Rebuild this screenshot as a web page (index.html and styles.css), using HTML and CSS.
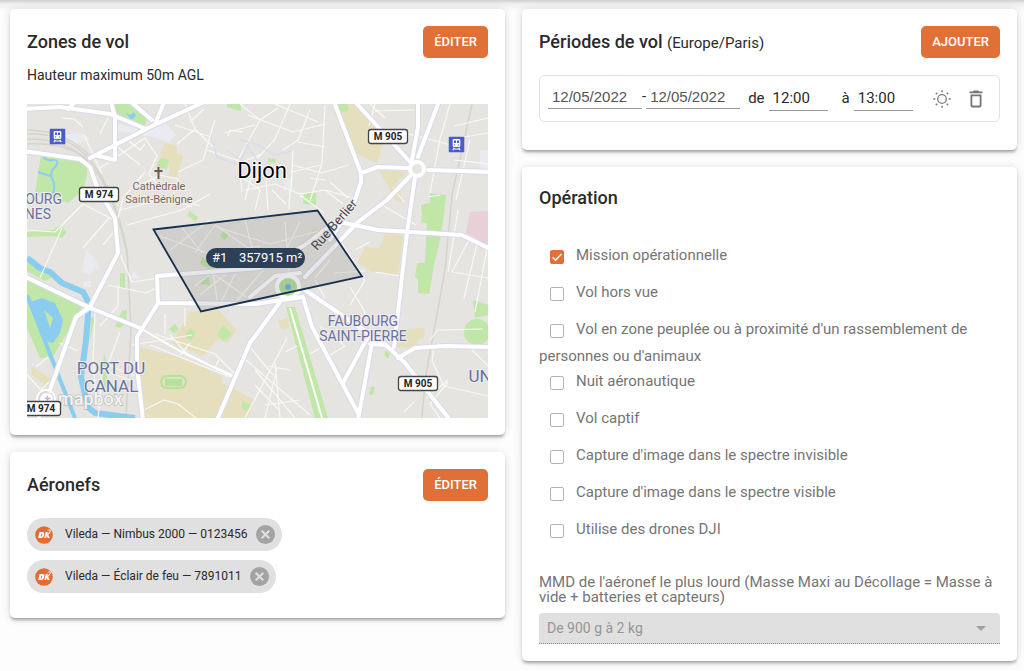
FILE: index.html
```html
<!DOCTYPE html>
<html lang="fr">
<head>
<meta charset="utf-8">
<meta name="viewport" content="width=device-width, initial-scale=1">
<title>Déclaration de vol</title>
<link rel="stylesheet" href="styles.css">
</head>
<body>
<svg class="defs" width="0" height="0" aria-hidden="true">
  <symbol id="dk" viewBox="0 0 18 18">
    <circle cx="9" cy="9" r="8.8" fill="#e56b2e"/>
    <path d="M4.6 6h3.2q2 0 1.5 2.3l-.3 1.2q-.6 2.5-2.7 2.5H3.1z" fill="#fff"/>
    <path d="M6.3 7.7h1l-.7 2.8h-1z" fill="#e56b2e"/>
    <path d="M10.8 6h1.9l-.5 2.1L14.8 5.4l1.4.2-3 3.1 1.6 3.3h-2.1l-1-2.2-.6 2.2H9.3z" fill="#fff"/>
    <path d="M12.6 4.6l2.7-1.4M14 5l2.2-.9" stroke="#fff" stroke-width=".7"/>
  </symbol>
  <symbol id="cancel" viewBox="0 0 19 19">
    <circle cx="9.5" cy="9.5" r="9.5" fill="#a3a3a3"/>
    <path d="M5.7 5.7l7.6 7.6M13.3 5.7l-7.6 7.6" stroke="#e0e0e0" stroke-width="2"/>
  </symbol>
  <symbol id="station" viewBox="0 0 16 16">
    <rect width="16" height="16" rx="1" fill="#4b5cc9"/>
    <path d="M5.5 2.5h5q1.3 0 1.3 1.3v5.4q0 1.3-1.3 1.3h-5q-1.300 0-1.300-1.300V3.800q0-1.300 1.300-1.300z" fill="#fff"/>
    <path d="M5.500 4h2v2.500h-2zM8.500 4h2v2.500h-2zM5.500 8h1.200v1H5.500zM9.300 8h1.200v1H9.300z" fill="#4b5cc9"/>
    <path d="M5.700 11.300L4.300 13.700M10.300 11.300l1.400 2.400M5 12.500h6" stroke="#fff" stroke-width="1.100"/>
  </symbol>
</svg>

<main class="page">
  <div class="column">
    <section class="card">
      <header class="card-head">
        <h2 class="title">Zones de vol</h2>
        <button class="btn" type="button">ÉDITER</button>
      </header>
      <p class="subtitle">Hauteur maximum 50m AGL</p>
      <svg class="map" viewBox="27 104 461 314" role="img" aria-label="Carte de Dijon">
        <rect x="27" y="104" width="461" height="314" fill="#e5e4e0"/>
        <!-- pedestrian areas and rail yard -->
        <path class="plaza" d="M118 124L145 130 165 122 176 135 169 142 148 136 118 131zM62 135L82 133 90 140 70 145zM86 250L94 257 101 271 94 268 90 276 82 272zM84 281h7v6h-7zM133 271l8 7h-10zM480 150h8v20h-8zM285 180l8-3-2 12-8 2z"/>
        <g class="rail">
          <path d="M27 134Q66 132 90 160T127 250L131 330 126 418M27 139Q70 138 93 167T128 260M27 144Q66 142 88 160M27 130Q66 130 92 158"/>
          <path d="M472 104L452 195 445 270 425 380 422 418"/>
        </g>
        <!-- sand blocks -->
        <path class="sand" d="M164 143L177 146 177 153 183 156 180 167 177 177 168 177 170 167 160 157zM338 110L347 104 355 104 383 137 383 143 377 163 355 153zM379 170L408 172 392 187 401 192 401 202 395 200zM385 233L403 235 398 275 373 272 357 263 365 247 380 248zM397 329L425 328 424 337 418 340 414 348 395 347zM140 347L180 357 222 376 222 383 255 400 248 418 144 418 139 370zM190 312L217 308 237 330 227 343 217 340 203 356 171 343zM32 367L50 378 47 387 31 374zM278 321L288 317 289 328 282 330zM313 228L325 231 318 241 309 239z"/>
        <path fill="#e7d0d8" d="M470 212L489 211 489 246 466 233z"/>
        <!-- parks -->
        <path class="park" d="M114 104L135 104 148 118 144 126 114 113zM41 155L87 163 87 175 83 190 68 203 35 193zM160 158L169 160 167 169 156 167zM227 104L241 104 241 111 227 107zM338 104L347 104 349 110 341 113zM268 158L276 159 275 163 268 162zM304 193L316 193 316 205 303 204zM430 193L446 195 444 215 440 240 434 265 431 283 429 294 418 293 418 279 415 277 417 263 425 263 427 223 421 222 422 215 421 205 430 203zM27 232L53 230 60 225 67 232 62 238 53 236 27 237zM27 280L83 305 53 357 40 358 27 328zM27 258L43 267 52 277 45 281 27 271zM120 273h5v16l-5-1zM122 311L127 310 126 323 120 328 115 326zM189 211L198 217 196 222 188 216zM202 257L213 265 211 270 200 264zM223 230l6 4-4 6-5-4zM205 276l4 1 1 8-10-1zM190 328l6 4-5 9-6-5zM223 325l9 9-8 7-7-6zM175 324l4 5-5 4-5-4zM243 401l7 4-3 6-6-3zM473 300L489 305 489 315 475 318zM386 350l4 4-2 5-4-4zM371 386l4 1-2 8-4-1zM104 353l3 12v16l4 7-4 3-5-7zM91 318l4-2-5 25zM286 307L295 307 328 418 315 418z"/>
        <circle class="park" cx="477" cy="332" r="13"/>
        <rect x="161" y="376" width="25" height="12" rx="6" fill="none" stroke="#b5e0a0" stroke-width="2"/>
        <rect x="165" y="379" width="17" height="7" fill="#b5e0a0"/>
        <!-- water -->
        <path class="water" d="M27 258L40 268 50 272 62 283 83 292 89 303 86 340 81 377 88 407 95 413 135 418" stroke-width="6"/>
        <path class="water" d="M27 295L50 354 75 418" stroke-width="4"/>
        <path fill="#8bcdef" d="M30 302L42 298 55 303 63 320 60 333 53 343 46 341 36 322zM126 113L130 115 134 112 136 116 131 120z"/>
        <path fill="#c3e6ab" d="M44 310L53 318 50 328z"/>
        <path class="water" d="M43 156q3 5 9 4 8-1 4 6-7 6-4 12 4 7 1 16M38 172l12 4" stroke-width="2"/>
        <!-- minor streets -->
        <g class="street">
          <path d="M62 118l12 1 9 8M84 135l18 39M110 114l-10 20M115 145l25 20M128 140l12 10 5-6M100 168l45-30 12 18-8 18 12 14M120 210l50-12 30 8M127 225l55-15 28-16M145 172l-22 26-5 20M140 185l20-10 18 4M178 179l-6 20 20 8M185 104l10 25 18 18M195 129l-18 15M175 125l36 12M190 122l14-13M215 120l-12 40-25 12M225 133l30-8M228 136l2-6 13 2M207 150l35 12 20-8"/>
          <path d="M240 104l20 16 18-12M260 120l-22 40 4 32M248 115l45 17 32-8M275 104l43 18M310 110l-12 30-15 10M325 105l-3 58-12 38M290 104l-15 35-20 22M298 142l27 5M293 150l-2 40M293 165l28 8 28-8M310 178l15 2M245 190l30-6 25 10 25-4 28 8M255 210l5-20-20-14M300 195l24 18M272 190l14 14M330 182l18 16M375 104l-6 22M385 130l-25-24M375 111l38-1M385 128l70 18M450 104l-10 35-10 54M488 118l-34 8M488 133l-36 6M454 160l35 4M470 140l-14 60M440 195l-12 2M393 188l11 14"/>
          <path d="M320 165l-28 7M266 180l2 30M245 200l6-22 28-4M290 189l-1 20M370 104l15 14M325 190l18 14M382 205l34 20M478 240l-14 58M488 244l-13 68M470 238l-18 34 36 6M458 210l-10 62M430 340l8-10 45-1M434 346l-2 15 12 25 44 10M448 380l-22 18M448 382l-18 22 10 14M472 350l17 17M404 412l10-10"/>
          <path d="M27 230l28 2 28-28 35 18M83 248l26-30M62 228l-22 50M103 245l10-12M118 250l14 32 80-12M108 285l38 8 12-6M118 286v20l-18 20M132 345l60-10M120 332l-12 32M95 312l-2 50 4 44M108 365l30 12M155 334l60 20 20 20M150 345l80 32M165 314v20M185 308v18M219 360l-4 7 18 8M170 335l20 22M98 420l4-50 28 10M144 410l20-10 14 4 18 14M180 355l10-12M248 345l25 30M240 355l70 60M255 370l40 48M255 385l24 25M265 418l12-50M280 418l-5-55M245 418l42-80M300 400l-35 5M290 370l-22-4M297 346l-12 6M320 326l25 20-20 12M325 345l-15 9M340 240l25 40-15 25M315 280l10 18M335 273l30-2M350 287l15 25-4 14M330 260l-15 18M355 250l15-8M375 272l26 4M27 375l14 15 8-8M36 367l12-10M60 343l18 8"/>
          <path d="M160 236l50 18 50-8M180 225l22 28M195 253l20-28 40 28M220 228l50 16 60-16M170 250l40-30M285 222l4 50M245 220l10 40M195 286l18-14 5 34M215 275l40 28M235 274l-15 30M265 268l-30 35M300 222l-20 40M200 295l25-20"/>
        </g>
        <path d="M211 137l6 20 22 8 8-20 12 18-4 18 20-8M226 150l18 12M240 140l18 5 16 10 18-4M250 165l-15 12" fill="none" stroke="#dadced" stroke-width="1.500"/>
        <!-- main roads -->
        <defs>
          <g id="roads" fill="none" stroke-linejoin="round" stroke-linecap="round">
            <path d="M24 109L60 107 110 114 146 129M111 102L115 117 115 160 95 155M131 102L152 120M202 103L150 127 90 158M164 102L156 122M75 102L68 109"/>
            <path d="M24 151L80 159 90 167 97 187 115 218 118 253 90 307 76 317 50 390 38 420M24 276L88 307 140 328M143 420L137 367 137 337 158 303 157 276 260 268 305 245 340 218M158 303L255 304 302 297M217 420L250 343 280 302"/>
            <path d="M415 171L387 200 358 222 305 277M334 102L361 173 361 182 355 200 330 240M361 173L378 167 408 168M357 104L411 163M418 102L418 127 412 160M438 104L418 157M428 170L492 172M415 177L407 233 394 347M340 222L378 230 462 235 492 250M305 290L368 333 388 347 405 363 450 420M303 297L312 327 358 413M372 343L358 420M370 333L343 383M370 344L386 345M398 358L415 348 445 346 492 347M250 297L275 276 300 273"/>
          </g>
        </defs>
        <use href="#roads" stroke="#d9daea" stroke-width="6"/>
        <use href="#roads" stroke="#fff" stroke-width="4"/>
        <path d="M140 328L180 351 232 376M290 308L322 418" fill="none" stroke="#fff" stroke-width="2"/>
        <circle cx="417" cy="169" r="7" fill="#e5e4e0" stroke="#fff" stroke-width="4"/>
        <circle cx="288" cy="287" r="11" fill="#b5e0a0" stroke="#fff" stroke-width="4"/>
        <circle cx="288" cy="287" r="3" fill="#71b7e6"/>
        <text class="road-name" x="317" y="251" transform="rotate(-49 317 251)">Rue Berlier</text>
        <!-- flight zone -->
        <path d="M153.500 229.500L317.500 210.500 362 276.500 201 311.500z" fill="#555" fill-opacity=".15" stroke="#17304f" stroke-width="1.800"/>

        <use href="#station" x="49.500" y="128.500" width="16" height="16"/>
        <use href="#station" x="448.500" y="136.500" width="16" height="16"/>
        <path d="M157.500 167h2v3h3v2h-3v7h-2v-7h-3v-2h3z" fill="#6f5a4e"/>
        <g class="logo">
          <circle cx="46" cy="399" r="9" fill="#ccc" fill-opacity=".5" stroke="#fff" stroke-width="2"/>
          <path d="M40 404q-1-10 6-11 7 0 7 6-1 7-13 5z" fill="#fff"/>
          <path d="M47.500 395l1 2.500 2.500 1-2.500 1-1 2.500-1-2.500-2.500-1 2.500-1z" fill="#bbb"/>
          <text x="58" y="405">mapbox</text>
        </g>
        <g class="shield">
          <rect x="79.500" y="187.500" width="39" height="14" rx="2.500"/>
          <rect x="368.500" y="129.500" width="39" height="14" rx="2.500"/>
          <rect x="398.500" y="376.500" width="39" height="14" rx="2.500"/>
          <rect x="20.500" y="401.500" width="40" height="14" rx="2.500"/>
        </g>
        <g class="shield-text">
          <text x="99" y="198">M 974</text>
          <text x="388" y="140">M 905</text>
          <text x="418" y="387">M 905</text>
          <text x="41" y="412">M 974</text>
        </g>
        <text class="city" x="262" y="178">Dijon</text>
        <g class="poi"><text x="159" y="190">Cathédrale</text><text x="159" y="203">Saint-Bénigne</text></g>
        <g class="district">
          <text x="363" y="326">FAUBOURG</text><text x="363" y="341">SAINT-PIERRE</text>
          <text x="62" y="204" text-anchor="end">OURG</text><text x="38" y="219">NES</text>
        </g>
        <g class="district large">
          <text x="111" y="374">PORT DU</text><text x="111" y="392">CANAL</text>
          <text x="480" y="382">UN</text>
        </g>
        <rect x="206" y="248" width="99" height="20" rx="10" fill="#2c4058"/>
        <text class="zone-text" x="212" y="262">#1</text>
        <text class="zone-text" x="239" y="262">357915 m²</text>
      </svg>
    </section>

    <section class="card aircraft">
      <header class="card-head">
        <h2 class="title">Aéronefs</h2>
        <button class="btn" type="button">ÉDITER</button>
      </header>
      <ul class="chips">
        <li class="chip"><svg class="chip-logo" aria-hidden="true"><use href="#dk"/></svg><span>Vileda — Nimbus 2000 — 0123456</span><button class="chip-close" type="button" aria-label="Retirer Nimbus 2000"><svg><use href="#cancel"/></svg></button></li>
        <li class="chip"><svg class="chip-logo" aria-hidden="true"><use href="#dk"/></svg><span>Vileda — Éclair de feu — 7891011</span><button class="chip-close" type="button" aria-label="Retirer Éclair de feu"><svg><use href="#cancel"/></svg></button></li>
      </ul>
    </section>
  </div>

  <div class="column">
    <section class="card periods">
      <header class="card-head">
        <h2 class="title">Périodes de vol <small class="zone">(Europe/Paris)</small></h2>
        <button class="btn" type="button">AJOUTER</button>
      </header>
      <div class="period">
        <div class="dates">
          <input class="field date" type="text" value="12/05/2022" aria-label="Date de début">
          <span>-</span>
          <input class="field date" type="text" value="12/05/2022" aria-label="Date de fin">
        </div>
        <div class="times">
          <label class="time-label">de <input class="field time" type="text" value="12:00"></label>
          <label class="time-label">à <input class="field time" type="text" value="13:00"></label>
        </div>
        <div class="actions">
          <button class="icon-btn" type="button" aria-label="Jour">
            <svg width="18" height="18" viewBox="0 0 18 18" fill="none" stroke="#7d7d7d"><circle cx="9" cy="9" r="4.300" stroke-width="1.300"/><path stroke-width="1.600" d="M9 .3v2M9 15.700v2M.3 9h2M15.700 9h2M2.900 2.900l1.300 1.300M13.800 13.800l1.300 1.300M2.900 15.100l1.300-1.300M13.800 4.200l1.300-1.300"/></svg>
          </button>
          <button class="icon-btn" type="button" aria-label="Supprimer">
            <svg width="14" height="18" viewBox="0 0 14 18" fill="#757575"><path d="M.5 1.500h3.300L4.800.5h4.400l1 1h3.300v1.800H.5zM1.500 4.500h11v11q0 1.900-1.900 1.900H3.400q-1.900 0-1.900-1.900zM3.300 6.300v9.300h7.400V6.300z" fill-rule="evenodd"/></svg>
          </button>
        </div>
      </div>
    </section>

    <section class="card">
      <h2 class="title">Opération</h2>
      <div class="options">
        <label class="option"><input class="check" type="checkbox" checked>Mission opérationnelle</label>
        <label class="option"><input class="check" type="checkbox">Vol hors vue</label>
        <label class="option"><input class="check" type="checkbox">Vol en zone peuplée ou à proximité d'un rassemblement de personnes ou d'animaux</label>
        <label class="option"><input class="check" type="checkbox">Nuit aéronautique</label>
        <label class="option"><input class="check" type="checkbox">Vol captif</label>
        <label class="option"><input class="check" type="checkbox">Capture d'image dans le spectre invisible</label>
        <label class="option"><input class="check" type="checkbox">Capture d'image dans le spectre visible</label>
        <label class="option"><input class="check" type="checkbox">Utilise des drones DJI</label>
      </div>
      <label class="mass-label" for="mass">MMD de l'aéronef le plus lourd (Masse Maxi au Décollage = Masse à vide + batteries et capteurs)</label>
      <div class="select-wrap">
        <select class="select" id="mass" disabled><option>De 900 g à 2 kg</option></select>
      </div>
    </section>
  </div>
</main>
</body>
</html>
```

FILE: styles.css
```css
* { box-sizing: border-box; }

body {
  margin: 0;
  min-height: 100vh;
  background: #fdfdfd linear-gradient(#cfcfcf, #f0f0f0 4px, #fdfdfd 12px) no-repeat;
  color: #2a2a2a;
  font: 15px/15px Roboto, "Liberation Sans", sans-serif;
}

.defs { display: none; }

.page {
  display: grid;
  grid-template-columns: 1fr 1fr;
  align-items: start;
  gap: 17px;
  padding: 9px 7px 10px 10px;
}

.column { display: grid; gap: 17px; min-width: 0; }

.card {
  padding: 17px;
  border-radius: 5px;
  background: #fff;
  box-shadow: 0 3px 3px -1px rgba(0, 0, 0, .3), 0 1px 8px rgba(0, 0, 0, .14);
}

.card-head {
  display: flex;
  align-items: center;
  justify-content: space-between;
}

.title { margin: 0; font-size: 18px; font-weight: 500; line-height: 28px; }
.zone { font-size: 15px; font-weight: 400; }
.subtitle { margin: 8px 0 20px; font-size: 14px; line-height: 18px; }

.btn {
  height: 32px;
  padding: 0 11px;
  border: 0;
  border-radius: 5px;
  background: #e07038;
  color: #fff;
  font: 500 13px/16px Roboto, "Liberation Sans", sans-serif;
}

/* Map */
.map { display: block; width: 100%; height: auto; overflow: hidden; }
.map text { font-family: Roboto, "Liberation Sans", sans-serif; }
.park { fill: #c0e6a8; }
.sand { fill: #e5dfbe; }
.plaza { fill: #eaebf0; }
.water { fill: none; stroke: #8bcdef; stroke-linejoin: round; }
.rail { fill: none; stroke: #d6d4ca; stroke-width: 1.5; }
.street { fill: none; stroke: #f8f8f6; stroke-width: 1.2; stroke-linejoin: round; }
.shield { fill: #fff; stroke: #444; stroke-width: 1.3; }
.shield-text { font-size: 10px; font-weight: 700; fill: #222; text-anchor: middle; }
.city { font-size: 22px; font-weight: 400; text-anchor: middle; stroke: #fff; stroke-width: 2px; paint-order: stroke; }
.poi { font-size: 11px; fill: #7a6558; text-anchor: middle; stroke: #f0efec; stroke-width: 2px; paint-order: stroke; }
.district { font-size: 14px; fill: #6a709f; text-anchor: middle; stroke: #efeeee; stroke-width: 2px; paint-order: stroke; }
.large { font-size: 17px; }
.road-name { font-size: 13px; fill: #444; stroke: #eee; stroke-width: 2px; paint-order: stroke; }
.zone-text { font-size: 13px; fill: #fff; }
.logo text { font-size: 18px; font-weight: 500; fill: #f4f4f2; stroke: #aaa; stroke-width: 1px; paint-order: stroke; }

/* Aircraft */
.aircraft { padding-bottom: 25px; }
.chips { display: grid; justify-items: start; gap: 9px; margin: 17px 0 0; padding: 0; list-style: none; }
.chip {
  display: flex;
  align-items: center;
  height: 33px;
  padding: 0 7px 0 8px;
  border-radius: 17px;
  background: #e0e0e0;
  font-size: 12px;
}
.chip-logo { width: 18px; height: 18px; margin-right: 12px; }
.chip-close { width: 19px; height: 19px; margin-left: 8px; padding: 0; border: 0; background: none; }
.chip-close svg { display: block; width: 19px; height: 19px; }

/* Periods */
.periods { padding-bottom: 28px; }
.period {
  display: flex;
  align-items: center;
  height: 47px;
  margin-top: 17px;
  padding: 0 16px 0 8px;
  border: 1px solid #e2e2e2;
  border-radius: 5px;
}
.dates { display: flex; align-items: center; margin-bottom: 4px; }
.field {
  height: 24px;
  padding: 0 4px;
  border: 0;
  border-bottom: 1px solid #999;
  border-radius: 0;
  background: none;
  color: #2a2a2a;
  font: 15px/20px Roboto, "Liberation Sans", sans-serif;
}
.date { width: 94px; color: #555; font-family: "Liberation Sans", sans-serif; }
.times { display: flex; gap: 14px; margin-left: 8px; }
.time-label { display: flex; align-items: center; gap: 4px; }
.time { width: 59px; }
.actions { display: flex; align-items: center; gap: 18px; margin-left: auto; }
.icon-btn { display: flex; padding: 0; border: 0; background: none; }

/* Operation */
.options { margin-top: 26px; color: #757575; }
.option { display: block; }
.check {
  appearance: none;
  width: 14px;
  height: 14px;
  margin: 12px 12px 11px 11px;
  border: 1px solid #b4b4b4;
  border-radius: 2px;
  background: #fff;
  vertical-align: middle;
}
.check:checked {
  border-color: #e07038;
  background: #e07038 url("data:image/svg+xml,%3Csvg xmlns='http://www.w3.org/2000/svg' viewBox='0 0 12 12'%3E%3Cpath d='M1.500 6.200l3 3 6-6.200' fill='none' stroke='white' stroke-width='1.500'/%3E%3C/svg%3E");
}
.mass-label { display: block; margin: 26px 0 8px; color: #757575; }
.select-wrap { position: relative; }
.select-wrap::after {
  content: "";
  position: absolute;
  top: 13px;
  right: 14px;
  border: 5px solid transparent;
  border-top-color: #a0a0a0;
  border-bottom: 0;
}
.select {
  appearance: none;
  display: block;
  width: 100%;
  height: 31px;
  padding: 0 8px;
  border: 0;
  border-bottom: 1px dotted #888;
  border-radius: 4px 4px 0 0;
  background: #e0e0e0;
  color: #959595;
  opacity: 1;
  font: 14px/20px Roboto, "Liberation Sans", sans-serif;
}
```
